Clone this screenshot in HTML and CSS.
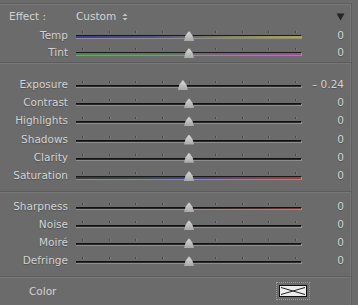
FILE: index.html
```html
<!DOCTYPE html>
<html>
<head>
<meta charset="utf-8">
<link rel="stylesheet" href="styles.css">
</head>
<body>
<div class="panel">
  <div class="header">
    <span class="effect-label">Effect :</span>
    <span class="preset">Custom
      <svg class="updown" width="6" height="8" viewBox="0 0 6 8"><path d="M3 0.5 L5.5 3 H0.5 Z M3 7.5 L5.5 5 H0.5 Z" fill="#c4c4c4"/></svg>
    </span>
    <svg class="collapse" width="9" height="8" viewBox="0 0 9 8"><path d="M0.5 0.5 H8.5 L4.5 7.5 Z" fill="#262626"/></svg>
  </div>

  <section class="group first">
    <div class="row"><span class="label">Temp</span><div class="slider"><div class="ticks"><i></i><i></i><i></i><i></i><i></i><i></i><i></i><i></i><i></i></div><div class="track temp"></div><span class="thumb" style="left:50%"></span></div><span class="value">0</span></div>
    <div class="row"><span class="label">Tint</span><div class="slider"><div class="ticks"><i></i><i></i><i></i><i></i><i></i><i></i><i></i><i></i><i></i></div><div class="track tint"></div><span class="thumb" style="left:50%"></span></div><span class="value">0</span></div>
  </section>

  <section class="group second">
    <div class="row"><span class="label">Exposure</span><div class="slider"><div class="ticks"><i></i><i></i><i></i><i></i><i></i><i></i><i></i><i></i><i></i></div><div class="track"></div><span class="thumb" style="left:47.3%"></span></div><span class="value">– 0.24</span></div>
    <div class="row"><span class="label">Contrast</span><div class="slider"><div class="ticks"><i></i><i></i><i></i><i></i><i></i><i></i><i></i><i></i><i></i></div><div class="track"></div><span class="thumb" style="left:50%"></span></div><span class="value">0</span></div>
    <div class="row"><span class="label">Highlights</span><div class="slider"><div class="ticks"><i></i><i></i><i></i><i></i><i></i><i></i><i></i><i></i><i></i></div><div class="track"></div><span class="thumb" style="left:50%"></span></div><span class="value">0</span></div>
    <div class="row"><span class="label">Shadows</span><div class="slider"><div class="ticks"><i></i><i></i><i></i><i></i><i></i><i></i><i></i><i></i><i></i></div><div class="track"></div><span class="thumb" style="left:50%"></span></div><span class="value">0</span></div>
    <div class="row"><span class="label">Clarity</span><div class="slider"><div class="ticks"><i></i><i></i><i></i><i></i><i></i><i></i><i></i><i></i><i></i></div><div class="track"></div><span class="thumb" style="left:50%"></span></div><span class="value">0</span></div>
    <div class="row"><span class="label">Saturation</span><div class="slider"><div class="ticks"><i></i><i></i><i></i><i></i><i></i><i></i><i></i><i></i><i></i></div><div class="track sat"></div><span class="thumb" style="left:50%"></span></div><span class="value">0</span></div>
  </section>

  <section class="group third">
    <div class="row"><span class="label">Sharpness</span><div class="slider"><div class="ticks"><i></i><i></i><i></i><i></i><i></i><i></i><i></i><i></i><i></i></div><div class="track sharp"></div><span class="thumb" style="left:50%"></span></div><span class="value">0</span></div>
    <div class="row"><span class="label">Noise</span><div class="slider"><div class="ticks"><i></i><i></i><i></i><i></i><i></i><i></i><i></i><i></i><i></i></div><div class="track"></div><span class="thumb" style="left:50%"></span></div><span class="value">0</span></div>
    <div class="row"><span class="label">Moiré</span><div class="slider"><div class="ticks"><i></i><i></i><i></i><i></i><i></i><i></i><i></i><i></i><i></i></div><div class="track"></div><span class="thumb" style="left:50%"></span></div><span class="value">0</span></div>
    <div class="row"><span class="label">Defringe</span><div class="slider"><div class="ticks"><i></i><i></i><i></i><i></i><i></i><i></i><i></i><i></i><i></i></div><div class="track"></div><span class="thumb" style="left:50%"></span></div><span class="value">0</span></div>
  </section>

  <section class="group last">
    <div class="color-row">
      <span class="color-label">Color</span>
      <span class="swatch">
        <svg width="28" height="12" viewBox="0 0 28 12"><rect x="0.5" y="0.5" width="27" height="11" fill="#ececec" stroke="#111" stroke-width="1"/><path d="M2 2.5 L14 6 L26 2.5 M2 9.5 L14 6 L26 9.5" stroke="#222" stroke-width="1" fill="none"/></svg>
      </span>
    </div>
  </section>
</div>
</body>
</html>
```

FILE: styles.css
```css
html, body {
  margin: 0;
  padding: 0;
  background: #6b6b6b;
}
body {
  width: 358px;
  height: 305px;
  overflow: hidden;
  font-family: "DejaVu Sans", "Liberation Sans", sans-serif;
  font-size: 10.5px;
  color: #d2d2d2;
}
.panel {
  margin-top: 3px;
  width: 352px;
  border-top: 1px solid #5f5f5f;
  border-right: 1px solid #5f5f5f;
  box-shadow: inset 0 1px 0 #777777, inset -1px 0 0 #777777;
  height: 302px;
  box-sizing: border-box;
}
.header {
  display: flex;
  align-items: center;
  height: 17px;
  margin-top: 4px;
  line-height: 17px;
}
.effect-label {
  width: 67px;
  padding-left: 9px;
  box-sizing: border-box;
}
.preset {
  margin-left: 9px;
  display: flex;
  align-items: center;
  gap: 6px;
}
.updown { display: block; }
.collapse {
  margin-left: auto;
  margin-right: 6px;
  display: block;
}
.group {
  border-bottom: 1px solid #5c5c5c;
  box-shadow: 0 1px 0 #787878;
}
.group.first { padding-top: 1px; padding-bottom: 2px; }
.group.first .row { height: 17px; }
.group.second { padding-top: 12px; padding-bottom: 7px; }
.group.second .row { height: 18.2px; }
.group.third { padding-top: 5px; padding-bottom: 7px; }
.group.last { border-bottom: 0; box-shadow: none; padding-top: 5px; }
.row {
  display: grid;
  grid-template-columns: 76px 226px 42px;
  align-items: center;
  height: 18px;
}
.label {
  text-align: right;
  padding-right: 8px;
  text-shadow: 0 1px 1px rgba(0,0,0,0.25);
}
.slider {
  position: relative;
  width: 226px;
  height: 100%;
  display: flex;
  flex-direction: column;
  justify-content: center;
  padding-top: 1px;
  box-sizing: border-box;
}
.ticks {
  display: flex;
  justify-content: space-between;
  padding: 0 6px;
  height: 2px;
  margin-bottom: 2px;
}
.ticks i {
  display: block;
  width: 1px;
  height: 2px;
  background: #474747;
  box-shadow: 1px 0 0 #7a7a7a;
}
.track {
  height: 1px;
  background: #2a2a2a;
  border-top: 1px solid #121212;
  border-bottom: 1px solid #8e8e8e;
  border-right: 1px solid #9a9a9a;
}
.track.temp {
  height: 2px;
  border-top-color: #1a1a1a;
  background: linear-gradient(90deg, #3c3c96 0%, #545480 35%, #84845e 65%, #a8a848 100%);
}
.track.tint {
  height: 2px;
  border-top-color: #1a1a1a;
  background: linear-gradient(90deg, #3d903d 0%, #557f55 35%, #805e80 65%, #a846a8 100%);
}
.track.sat {
  height: 2px;
  border-top-color: #1a1a1a;
  background: linear-gradient(90deg, #3a3a3a 0%, #3a4a4a 30%, #44448a 50%, #6a4466 70%, #a83838 100%);
}
.track.sharp {
  background: linear-gradient(90deg, #2a2a2a 0%, #2a2a2a 50%, #4e2e2e 80%, #7a3434 100%);
}
.thumb {
  position: absolute;
  top: 5px;
  width: 10px;
  height: 10px;
  margin-left: -5px;
  background: linear-gradient(#dadada, #a8a8a8);
  clip-path: polygon(50% 0, 85% 45%, 100% 100%, 0 100%, 15% 45%);
}
.value {
  text-align: right;
  text-shadow: 0 1px 1px rgba(0,0,0,0.25);
}
.color-row {
  display: flex;
  align-items: center;
  height: 18px;
}
.color-label {
  padding-left: 29px;
}
.swatch {
  margin-left: auto;
  margin-right: 44px;
  display: block;
  outline: 1px dotted #9a9a9a;
  outline-offset: 2px;
  height: 12px;
}
.swatch svg { display: block; }
```
